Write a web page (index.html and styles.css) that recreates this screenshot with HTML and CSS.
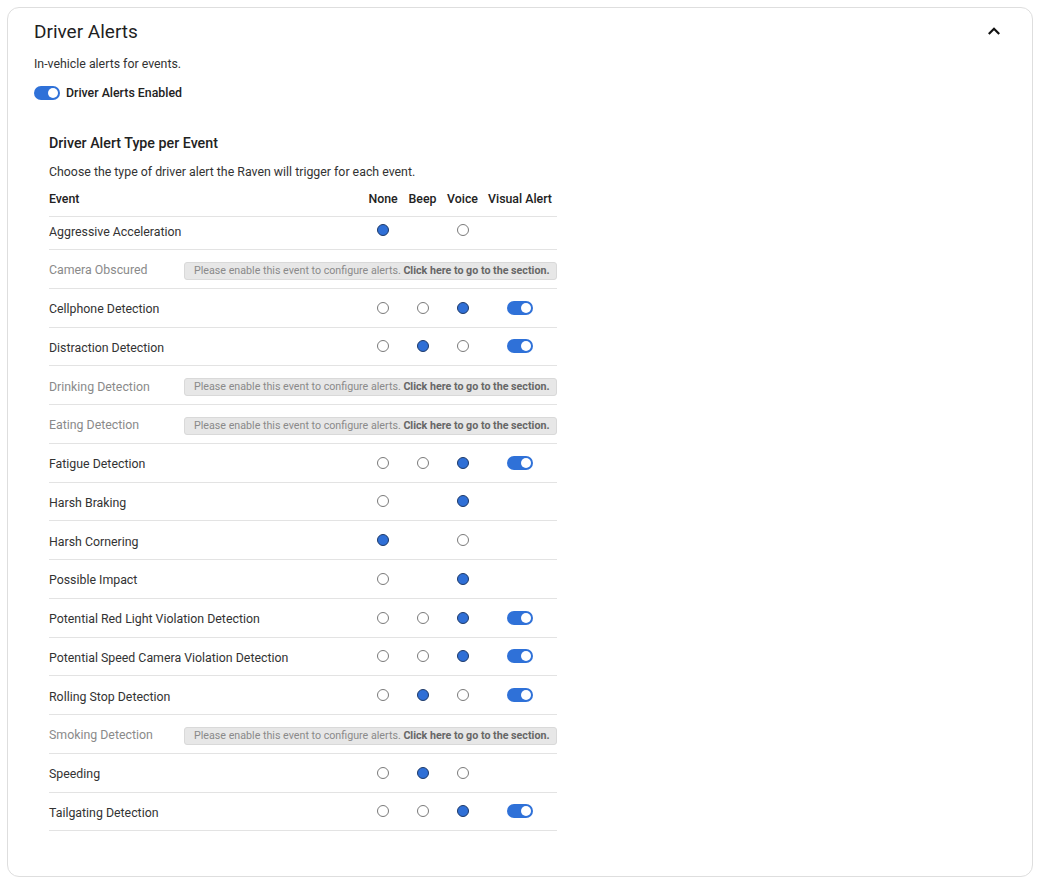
FILE: index.html
```html
<!DOCTYPE html>
<html lang="en">
<head>
<meta charset="utf-8">
<title>Driver Alerts</title>
<link rel="stylesheet" href="styles.css">
</head>
<body>
<div class="card">
  <div class="card-head">
    <h2 class="title">Driver Alerts</h2>
    <svg class="chevron" width="14" height="10" viewBox="0 0 14 10"><polyline points="1.8,8 7,2.8 12.2,8" fill="none" stroke="#111" stroke-width="2.2"/></svg>
  </div>
  <p class="subtitle">In-vehicle alerts for events.</p>
  <div class="master">
    <span class="toggle on"><span class="knob"></span></span>
    <span class="master-label">Driver Alerts Enabled</span>
  </div>

  <div class="section">
    <h3 class="section-title">Driver Alert Type per Event</h3>
    <p class="section-desc">Choose the type of driver alert the Raven will trigger for each event.</p>
    <div class="table">
      <div class="row head">
        <span class="c-event">Event</span>
        <span class="c-col">None</span>
        <span class="c-col">Beep</span>
        <span class="c-col">Voice</span>
        <span class="c-col c-vis">Visual Alert</span>
      </div>

      <div class="row first">
        <span class="c-event">Aggressive Acceleration</span>
        <span class="c-col"><span class="radio checked"></span></span>
        <span class="c-col"></span>
        <span class="c-col"><span class="radio"></span></span>
        <span class="c-col c-vis"></span>
      </div>

      <div class="row disabled">
        <span class="d-event">Camera Obscured</span>
        <span class="banner">Please enable this event to configure alerts. <b>Click here to go to the section.</b></span>
      </div>

      <div class="row">
        <span class="c-event">Cellphone Detection</span>
        <span class="c-col"><span class="radio"></span></span>
        <span class="c-col"><span class="radio"></span></span>
        <span class="c-col"><span class="radio checked"></span></span>
        <span class="c-col c-vis"><span class="toggle on"><span class="knob"></span></span></span>
      </div>

      <div class="row">
        <span class="c-event">Distraction Detection</span>
        <span class="c-col"><span class="radio"></span></span>
        <span class="c-col"><span class="radio checked"></span></span>
        <span class="c-col"><span class="radio"></span></span>
        <span class="c-col c-vis"><span class="toggle on"><span class="knob"></span></span></span>
      </div>

      <div class="row disabled">
        <span class="d-event">Drinking Detection</span>
        <span class="banner">Please enable this event to configure alerts. <b>Click here to go to the section.</b></span>
      </div>

      <div class="row disabled">
        <span class="d-event">Eating Detection</span>
        <span class="banner">Please enable this event to configure alerts. <b>Click here to go to the section.</b></span>
      </div>

      <div class="row">
        <span class="c-event">Fatigue Detection</span>
        <span class="c-col"><span class="radio"></span></span>
        <span class="c-col"><span class="radio"></span></span>
        <span class="c-col"><span class="radio checked"></span></span>
        <span class="c-col c-vis"><span class="toggle on"><span class="knob"></span></span></span>
      </div>

      <div class="row">
        <span class="c-event">Harsh Braking</span>
        <span class="c-col"><span class="radio"></span></span>
        <span class="c-col"></span>
        <span class="c-col"><span class="radio checked"></span></span>
        <span class="c-col c-vis"></span>
      </div>

      <div class="row">
        <span class="c-event">Harsh Cornering</span>
        <span class="c-col"><span class="radio checked"></span></span>
        <span class="c-col"></span>
        <span class="c-col"><span class="radio"></span></span>
        <span class="c-col c-vis"></span>
      </div>

      <div class="row">
        <span class="c-event">Possible Impact</span>
        <span class="c-col"><span class="radio"></span></span>
        <span class="c-col"></span>
        <span class="c-col"><span class="radio checked"></span></span>
        <span class="c-col c-vis"></span>
      </div>

      <div class="row">
        <span class="c-event">Potential Red Light Violation Detection</span>
        <span class="c-col"><span class="radio"></span></span>
        <span class="c-col"><span class="radio"></span></span>
        <span class="c-col"><span class="radio checked"></span></span>
        <span class="c-col c-vis"><span class="toggle on"><span class="knob"></span></span></span>
      </div>

      <div class="row">
        <span class="c-event">Potential Speed Camera Violation Detection</span>
        <span class="c-col"><span class="radio"></span></span>
        <span class="c-col"><span class="radio"></span></span>
        <span class="c-col"><span class="radio checked"></span></span>
        <span class="c-col c-vis"><span class="toggle on"><span class="knob"></span></span></span>
      </div>

      <div class="row">
        <span class="c-event">Rolling Stop Detection</span>
        <span class="c-col"><span class="radio"></span></span>
        <span class="c-col"><span class="radio checked"></span></span>
        <span class="c-col"><span class="radio"></span></span>
        <span class="c-col c-vis"><span class="toggle on"><span class="knob"></span></span></span>
      </div>

      <div class="row disabled">
        <span class="d-event">Smoking Detection</span>
        <span class="banner">Please enable this event to configure alerts. <b>Click here to go to the section.</b></span>
      </div>

      <div class="row">
        <span class="c-event">Speeding</span>
        <span class="c-col"><span class="radio"></span></span>
        <span class="c-col"><span class="radio checked"></span></span>
        <span class="c-col"><span class="radio"></span></span>
        <span class="c-col c-vis"></span>
      </div>

      <div class="row">
        <span class="c-event">Tailgating Detection</span>
        <span class="c-col"><span class="radio"></span></span>
        <span class="c-col"><span class="radio"></span></span>
        <span class="c-col"><span class="radio checked"></span></span>
        <span class="c-col c-vis"><span class="toggle on"><span class="knob"></span></span></span>
      </div>
    </div>
  </div>
</div>
</body>
</html>
```

FILE: styles.css
```css
* { box-sizing: border-box; }
html, body { margin: 0; padding: 0; background: #fff; }
body {
  padding: 7px 5px 5px 7px;
  font-family: Roboto, "Liberation Sans", Arial, sans-serif;
  color: #222;
}
.card {
  width: 1026px;
  border: 1px solid #dedede;
  border-radius: 12px;
  padding: 12px 26px 45px 26px;
  background: #fff;
}
.card-head {
  display: flex;
  justify-content: space-between;
  align-items: center;
  height: 24px;
}
.title {
  margin: 0;
  font-size: 19px;
  line-height: 24px;
  font-weight: 400;
  color: #1f1f1f;
}
.chevron { margin-right: 5px; margin-top: -2px; }
.subtitle {
  margin: 12px 0 0 0;
  font-size: 12.35px;
  line-height: 16px;
  color: #333;
}
.master {
  display: flex;
  align-items: center;
  gap: 6px;
  margin-top: 13px;
  height: 16px;
}
.master-label {
  font-size: 12.35px;
  line-height: 16px;
  font-weight: 500;
  color: #222;
}
.toggle {
  display: inline-block;
  position: relative;
  width: 26px;
  height: 14px;
  border-radius: 7px;
  background: #2f71d8;
  flex: 0 0 auto;
}
.toggle .knob {
  position: absolute;
  right: 2px;
  top: 2px;
  width: 10px;
  height: 10px;
  border-radius: 50%;
  background: #fff;
}
.section {
  padding-left: 15px;
  margin-top: 32px;
  width: 523px;
}
.section-title {
  margin: 0;
  font-size: 14.25px;
  line-height: 20px;
  font-weight: 500;
  color: #222;
}
.section-desc {
  margin: 11px 0 0 0;
  font-size: 12.35px;
  line-height: 16px;
  color: #333;
}
.table { margin-top: 8px; width: 508px; }
.row {
  display: grid;
  grid-template-columns: 314px 40px 39px 41px 74px;
  align-items: center;
  height: 38.75px;
  border-bottom: 1px solid #e3e3e3;
  font-size: 12.35px;
  line-height: 16px;
  color: #333;
}
.row.head {
  height: 29px;
  align-items: end;
  padding-bottom: 9px;
  font-weight: 500;
  color: #222;
}
.row.first { height: 33px; }
.row.first > * { margin-top: -6px; }
.c-event, .d-event { padding-top: 3px; }
.row.head .c-event { padding-top: 0; }
.c-col {
  display: flex;
  justify-content: center;
  align-items: center;
}
.row.disabled {
  display: flex;
  align-items: center;
}
.d-event { flex: 0 0 135px; color: #8a8a8a; }
.banner {
  flex: 1;
  height: 18px;
  margin-top: 4px;
  background: #e7e7e7;
  border: 1px solid #d9d9d9;
  border-radius: 3px;
  font-size: 10.7px;
  line-height: 16px;
  padding-left: 9px;
  color: #8a8a8a;
  white-space: nowrap;
  overflow: hidden;
}
.banner b { color: #666; font-weight: 700; }
.radio {
  display: inline-block;
  width: 12px;
  height: 12px;
  border-radius: 50%;
  border: 1px solid #7a7a7a;
  background: #fff;
}
.radio.checked {
  background: #2f6fd6;
  border-color: #1d3968;
}
```
